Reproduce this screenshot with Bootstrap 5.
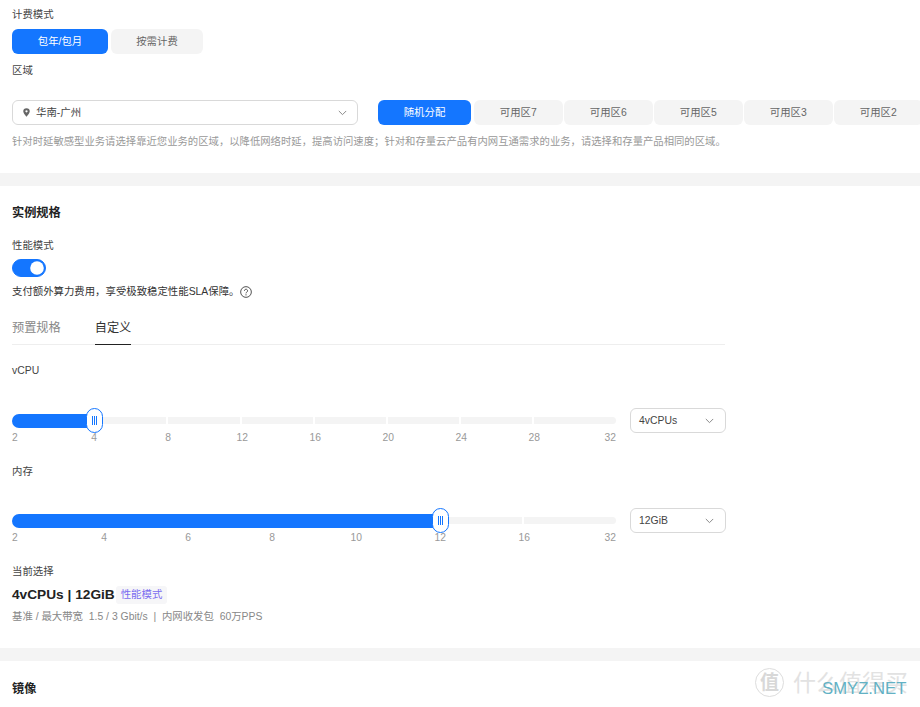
<!DOCTYPE html>
<html lang="zh-CN">
<head>
<meta charset="utf-8">
<title>实例规格</title>
<link href="https://cdn.jsdelivr.net/npm/bootstrap@5.3.0/dist/css/bootstrap.min.css" rel="stylesheet">
<style>
html,body{height:707px;overflow:hidden;background:#fff}
body{font-family:"Liberation Sans","Noto Sans CJK SC",sans-serif;font-size:10.4px;line-height:14px;color:#333;position:relative;width:920px}
.pad{padding-left:12px;padding-right:12px}
.lbl{font-size:10.4px;line-height:14px;color:#444;height:14px}
.gap-band{height:13px;background:#f4f4f4}
.opt{height:25px;padding:0;border:0;border-radius:6px;background:#f4f4f4;color:#666;font-size:10.4px;line-height:25px;flex:none}
.opt.on{background:#1476ff;color:#fff}
.opt.on:hover,.opt:hover{color:inherit}
.w96{width:96px}.w92{width:92px}.w93{width:93px}.w88{width:88.5px}
.gap3{gap:3px;margin-top:7px}.gap1px{gap:1.5px}
.sel{height:25px;border:1px solid #d9d9d9;border-radius:6px;background:#fff;color:#444;font-size:10.4px;padding:0 11px 0 8px;flex:none}
.sel-region{width:346px;margin-right:20px;padding-left:10px;padding-right:10px}
.sel-small{width:96px;margin-left:14px}
.pin{margin-right:6px;flex:none}
.after-on{margin-right:1.5px}
.area-lbl{margin-top:10px;margin-bottom:22px}
.row-clip{margin-right:-12px}
.hint{font-size:10.35px;color:#999;margin-top:10px;height:14px;white-space:nowrap}
.sec1-end{height:24px}
.ttl{font-size:12.2px;line-height:16px;font-weight:700;color:#222}
.sec2{padding-top:19px}
.lbl-perf{margin-top:18px}
.sw.form-check-input{width:34px;height:18px;margin:0;float:none;background-color:#1476ff;border-color:#1476ff;display:block;background-image:url("data:image/svg+xml,%3csvg xmlns='http://www.w3.org/2000/svg' viewBox='-4 -4 8 8'%3e%3ccircle r='3.4' fill='%23fff'/%3e%3c/svg%3e")}
.sw-wrap.form-check{min-height:0;padding:0;margin:6px 0 0;height:18px}
.mt7{margin-top:7px}.mt8{margin-top:8px}.mt6{margin-top:6px}
.qmark{margin-left:1px}
.tabs{height:34px;border-bottom:1px solid #eee;width:713px;margin-top:12px;gap:34px}
.tabs .nav-link{padding:0;height:34px;line-height:34px;font-size:12.2px;color:#888;background:none;border:0;border-radius:0}
.tabs .nav-link.active{color:#333;border-bottom:1px solid #222}
.lbl-cpu{margin-top:19px}
.sldr{width:604px;flex:none}
.cpu-grid{display:grid;grid-template-columns:82px 74px 74px 73px 73px 73px 73px 82px}
.mem-grid{display:grid;grid-template-columns:92px 84px 84px 84px 84px 84px 92px}
.trk{height:25px;position:relative;align-items:center}
.seg{height:7px;background:#f4f4f4;margin-right:2px}
.seg.tail{margin-right:0;border-radius:0 4px 4px 0}
.fill{height:14px;background:#1476ff;border-radius:7px 0 0 7px}
.span1{grid-column:span 1}.span5{grid-column:span 5}
.thumb{position:absolute;top:0;width:17px;height:25px;border:1px solid #1476ff;border-radius:9px;background:#fff;gap:1px}
.thumb i{display:block;width:1px;height:9px;background:#1476ff}
.th-cpu{left:74px}.th-mem{left:420px}
.ticks{font-size:10.3px;line-height:12px;color:#999;margin-top:-1px}
.ticks div{text-align:right}
.ticks span{margin-right:-3px}
.ticks .dbl span{margin-right:-6px}
.ticks .end span{margin-right:0}
.ticks .first{display:flex;justify-content:space-between}
.ticks .first span:first-child{margin-right:0}
.sp-a{margin-top:30px}.sp-b{margin-top:21px}.sp-c{margin-top:29px}
.big{font-size:13.7px;line-height:18px;font-weight:700;color:#222}
.ptag{font-size:10.4px;line-height:18px;height:18px;padding:0 5px;margin-left:1px;color:#7a6cf0;background:#f6f6f8;border-radius:3px}
.spec{color:#888;white-space:pre}
.sec2-end{height:24px}
.sec3{padding-top:20px}
.mark-wrap{position:absolute;left:755px;top:667px;height:31px;pointer-events:none}
.mark-ring{width:29px;height:29px;border:1px solid #ddd;border-radius:50%;font-size:19px;color:#d8d8d8;line-height:27px;text-align:center;font-weight:700}
.mark-cn{font-size:23px;line-height:30px;color:#e2e2e2;margin-left:9px;white-space:nowrap}
.mark-en{position:absolute;left:67px;top:11px;font-size:16.7px;line-height:22px;color:#62b1c4;white-space:nowrap}
</style>
</head>
<body>
<section class="pad pt-2">
  <div class="lbl">计费模式</div>
  <div class="d-flex gap3">
    <button type="button" class="btn opt on w96">包年/包月</button>
    <button type="button" class="btn opt w92">按需计费</button>
  </div>
  <div class="lbl area-lbl">区域</div>
  <div class="d-flex overflow-hidden row-clip">
    <button type="button" class="btn sel sel-region d-flex align-items-center">
      <svg width="7" height="9" viewBox="0 0 8 10" class="pin"><path fill="#666" fill-rule="evenodd" d="M4 0a3.7 3.7 0 0 0-3.7 3.7C.3 6.2 4 10 4 10s3.7-3.8 3.7-6.3A3.7 3.7 0 0 0 4 0zm0 2.4a1.3 1.3 0 1 1 0 2.6 1.3 1.3 0 0 1 0-2.6z"/></svg>
      <span>华南-广州</span>
      <svg width="9" height="6" viewBox="0 0 11 7" class="ms-auto"><path fill="none" stroke="#888" stroke-width="1.2" d="M1 1l4.5 4.5L10 1"/></svg>
    </button>
    <div class="d-flex gap1px">
      <button type="button" class="btn opt on w93 after-on">随机分配</button>
      <button type="button" class="btn opt w88">可用区7</button>
      <button type="button" class="btn opt w88">可用区6</button>
      <button type="button" class="btn opt w88">可用区5</button>
      <button type="button" class="btn opt w88">可用区3</button>
      <button type="button" class="btn opt w88">可用区2</button>
    </div>
  </div>
  <div class="hint">针对时延敏感型业务请选择靠近您业务的区域，以降低网络时延，提高访问速度；针对和存量云产品有内网互通需求的业务，请选择和存量产品相同的区域。</div>
  <div class="sec1-end"></div>
</section>
<div class="gap-band"></div>
<section class="pad sec2">
  <div class="ttl">实例规格</div>
  <div class="lbl lbl-perf">性能模式</div>
  <div class="form-check form-switch sw-wrap"><input class="form-check-input sw" type="checkbox" role="switch" checked aria-label="性能模式"></div>
  <div class="d-flex align-items-center mt8">
    <span>支付额外算力费用，享受极致稳定性能SLA保障。</span>
    <svg width="12" height="12" viewBox="0 0 13 13" class="qmark"><circle cx="6.5" cy="6.5" r="5.8" fill="none" stroke="#444" stroke-width="1"/><path fill="none" stroke="#444" stroke-width="1" d="M4.8 5.2a1.7 1.7 0 1 1 2.6 1.4c-.6.4-.9.7-.9 1.4"/><circle cx="6.5" cy="9.6" r=".7" fill="#444"/></svg>
  </div>
  <ul class="nav tabs">
    <li class="nav-item"><a class="nav-link" href="#">预置规格</a></li>
    <li class="nav-item"><a class="nav-link active" href="#">自定义</a></li>
  </ul>
  <div class="lbl lbl-cpu">vCPU</div>
  <div class="d-flex align-items-start sp-a">
    <div class="sldr">
      <div class="cpu-grid trk">
        <div class="fill span1"></div>
        <div class="seg"></div><div class="seg"></div><div class="seg"></div><div class="seg"></div><div class="seg"></div><div class="seg"></div><div class="seg tail"></div>
        <div class="thumb th-cpu d-flex align-items-center justify-content-center"><i></i><i></i><i></i></div>
      </div>
      <div class="cpu-grid ticks">
        <div class="first"><span>2</span><span>4</span></div>
        <div><span>8</span></div><div class="dbl"><span>12</span></div><div class="dbl"><span>16</span></div><div class="dbl"><span>20</span></div><div class="dbl"><span>24</span></div><div class="dbl"><span>28</span></div><div class="end"><span>32</span></div>
      </div>
    </div>
    <button type="button" class="btn sel sel-small d-flex align-items-center">4vCPUs
      <svg width="9" height="6" viewBox="0 0 11 7" class="ms-auto"><path fill="none" stroke="#888" stroke-width="1.2" d="M1 1l4.5 4.5L10 1"/></svg>
    </button>
  </div>
  <div class="lbl sp-b">内存</div>
  <div class="d-flex align-items-start sp-c">
    <div class="sldr">
      <div class="mem-grid trk">
        <div class="fill span5"></div>
        <div class="seg"></div><div class="seg tail"></div>
        <div class="thumb th-mem d-flex align-items-center justify-content-center"><i></i><i></i><i></i></div>
      </div>
      <div class="mem-grid ticks">
        <div class="first"><span>2</span><span>4</span></div>
        <div><span>6</span></div><div><span>8</span></div><div class="dbl"><span>10</span></div><div class="dbl"><span>12</span></div><div class="dbl"><span>16</span></div><div class="end"><span>32</span></div>
      </div>
    </div>
    <button type="button" class="btn sel sel-small d-flex align-items-center">12GiB
      <svg width="9" height="6" viewBox="0 0 11 7" class="ms-auto"><path fill="none" stroke="#888" stroke-width="1.2" d="M1 1l4.5 4.5L10 1"/></svg>
    </button>
  </div>
  <div class="lbl sp-b">当前选择</div>
  <div class="d-flex align-items-center mt7">
    <span class="big">4vCPUs | 12GiB</span><span class="ptag">性能模式</span>
  </div>
  <div class="spec mt6">基准 / 最大带宽  1.5 / 3 Gbit/s  |  内网收发包  60万PPS</div>
  <div class="sec2-end"></div>
</section>
<div class="gap-band"></div>
<section class="pad sec3">
  <div class="ttl">镜像</div>
</section>
<div class="mark-wrap d-flex align-items-center">
  <div class="mark-ring">值</div>
  <div class="mark-cn">什么值得买</div>
  <div class="mark-en">SMYZ.NET</div>
</div>
<script src="https://cdn.jsdelivr.net/npm/bootstrap@5.3.0/dist/js/bootstrap.bundle.min.js"></script>
</body>
</html>
